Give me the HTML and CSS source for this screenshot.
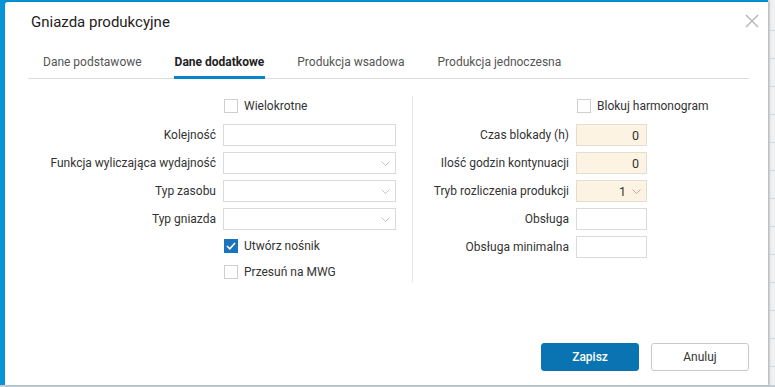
FILE: index.html
```html
<!DOCTYPE html>
<html lang="pl">
<head>
<meta charset="utf-8">
<title>Gniazda produkcyjne</title>
<link rel="stylesheet" href="styles.css">
</head>
<body>
<div class="screen">
  <div class="app">
    <div class="dialog">
      <div class="header">
        <h1 class="title">Gniazda produkcyjne</h1>
        <svg class="close" width="14" height="14" viewBox="0 0 14 14"><path d="M1 1 L13 13 M13 1 L1 13" stroke="#b4b4b4" stroke-width="1.4" fill="none"/></svg>
      </div>
      <div class="tabs">
        <span class="tab">Dane podstawowe</span>
        <span class="tab active">Dane dodatkowe</span>
        <span class="tab">Produkcja wsadowa</span>
        <span class="tab">Produkcja jednoczesna</span>
      </div>
      <div class="form">
        <div class="col col-left">
          <span></span>
          <label class="check first"><span class="box"></span>Wielokrotne</label>
          <span class="lbl">Kolejność</span>
          <span class="input"></span>
          <span class="lbl">Funkcja wyliczająca wydajność</span>
          <span class="input select"><svg class="chev" width="9" height="5" viewBox="0 0 9 5"><path d="M0.5 0.5 L4.5 4.5 L8.5 0.5" stroke="#c4c4c4" fill="none"/></svg></span>
          <span class="lbl">Typ zasobu</span>
          <span class="input select"><svg class="chev" width="9" height="5" viewBox="0 0 9 5"><path d="M0.5 0.5 L4.5 4.5 L8.5 0.5" stroke="#c4c4c4" fill="none"/></svg></span>
          <span class="lbl">Typ gniazda</span>
          <span class="input select"><svg class="chev" width="9" height="5" viewBox="0 0 9 5"><path d="M0.5 0.5 L4.5 4.5 L8.5 0.5" stroke="#c4c4c4" fill="none"/></svg></span>
          <span></span>
          <label class="check"><span class="box checked"><svg width="14" height="14" viewBox="0 0 14 14"><path d="M3 7 L5.8 9.8 L11 4" stroke="#fff" stroke-width="1.6" fill="none"/></svg></span>Utwórz nośnik</label>
          <span></span>
          <label class="check"><span class="box"></span>Przesuń na MWG</label>
        </div>
        <div class="divider"></div>
        <div class="col col-right">
          <span></span>
          <label class="check first"><span class="box"></span>Blokuj harmonogram</label>
          <span class="lbl">Czas blokady (h)</span>
          <span class="input warm num">0</span>
          <span class="lbl">Ilość godzin kontynuacji</span>
          <span class="input warm num">0</span>
          <span class="lbl">Tryb rozliczenia produkcji</span>
          <span class="input warm num sel">1<svg class="chev2" width="9" height="5" viewBox="0 0 9 5"><path d="M0.5 0.5 L4.5 4.5 L8.5 0.5" stroke="#e3a08c" fill="none"/></svg></span>
          <span class="lbl">Obsługa</span>
          <span class="input"></span>
          <span class="lbl">Obsługa minimalna</span>
          <span class="input"></span>
        </div>
      </div>
      <div class="footer">
        <button class="btn primary">Zapisz</button>
        <button class="btn">Anuluj</button>
      </div>
    </div>
  </div>
  <div class="side">
    <div class="gridline"></div>
    <div class="gridline"></div>
    <div class="gridline"></div>
    <div class="gridline"></div>
    <div class="gridline"></div>
    <div class="gridline"></div>
    <div class="gridline"></div>
    <div class="gridline"></div>
    <div class="gridline"></div>
    <div class="gridline"></div>
    <div class="gridline"></div>
    <div class="gridline"></div>
    <div class="gridline"></div>
  </div>
</div>
<div class="bottombar"></div>
</body>
</html>
```
FILE: styles.css
```css
* { box-sizing: border-box; }
html, body { margin: 0; padding: 0; }
body {
  width: 775px;
  height: 387px;
  overflow: hidden;
  font-family: Roboto, "Liberation Sans", sans-serif;
  color: #333;
  background: #fff;
}
.screen {
  display: flex;
  height: 385px;
}
.app {
  width: 768px;
  background: #0795d8;
  padding: 2px 0 0 5px;
  position: relative;
  z-index: 1;
}
.dialog {
  height: 383px;
  background: #fff;
  border-top-left-radius: 3px;
  display: flex;
  flex-direction: column;
  box-shadow: 1px 0 3px rgba(0,0,0,0.18);
}
.header {
  display: flex;
  justify-content: space-between;
  align-items: flex-start;
  padding: 11px 9px 0 26px;
  height: 46px;
}
.title {
  margin: 0;
  font-size: 15px;
  line-height: 18px;
  font-weight: 400;
  color: #222;
}
.close { margin-top: 1px; }
.tabs {
  display: flex;
  gap: 31px;
  margin: 0 19px 0 23px;
  padding-left: 14px;
  border-bottom: 1px solid #dedede;
  height: 31px;
}
.tab {
  font-size: 12px;
  color: #555;
  padding: 7px 1px 0;
  white-space: nowrap;
}
.tab.active {
  font-weight: 700;
  color: #222;
  border-bottom: 3px solid #0a85c9;
  margin-bottom: -1px;
}
.form {
  display: flex;
  padding: 17px 0 0 23px;
}
.col {
  display: grid;
  row-gap: 6px;
  column-gap: 7px;
  align-items: center;
  font-size: 12px;
}
.col-left { grid-template-columns: 188px 173px; }
.col-right { grid-template-columns: 156px 71px; align-self: start; }
.lbl {
  text-align: right;
  white-space: nowrap;
  color: #333;
}
.input {
  height: 22px;
  border: 1px solid #dadada;
  background: #fff;
  position: relative;
  display: flex;
  align-items: center;
}
.input.select { justify-content: flex-end; padding-right: 5px; }
.input.warm { background: #fdf3e3; border-color: #e4ddd2; }
.input.num { justify-content: flex-end; padding-right: 7px; font-size: 12.5px; color: #333; }
.input.sel { padding-right: 5px; }
.chev2 { margin-left: 6px; }
.check {
  height: 20px;
  display: flex;
  align-items: center;
  gap: 6px;
  padding-left: 1px;
  color: #333;
  white-space: nowrap;
}
.check.first { margin-bottom: 2px; }
.box {
  flex: none;
  width: 14px;
  height: 14px;
  border: 1px solid #cfcfcf;
  background: #fff;
  display: flex;
}
.box.checked {
  background: #1b74bb;
  border-color: #1b74bb;
}
.box.checked svg { margin: -1px; }
.divider {
  width: 1px;
  background: #e6e6e6;
  margin: 0 0 0 16px;
  align-self: stretch;
}
.footer {
  margin-top: auto;
  display: flex;
  justify-content: flex-end;
  gap: 12px;
  padding: 0 19px 14px 0;
}
.btn {
  width: 98px;
  height: 28px;
  border-radius: 3px;
  border: 1px solid #c9c9c9;
  background: #fff;
  font-family: Roboto, "Liberation Sans", sans-serif;
  font-size: 12px;
  color: #333;
}
.btn.primary {
  background: #0a73b2;
  border-color: #0a73b2;
  color: #fff;
  font-weight: 500;
}
.side {
  flex: 1;
  background: #eef0f2;
  border-left: 2px solid #d8dde2;
  padding-top: 30px;
  display: flex;
  flex-direction: column;
  gap: 27px;
}
.gridline { height: 1px; background: #d4d9de; }
.bottombar {
  height: 2px;
  background: #c4ccd4;
}
```
